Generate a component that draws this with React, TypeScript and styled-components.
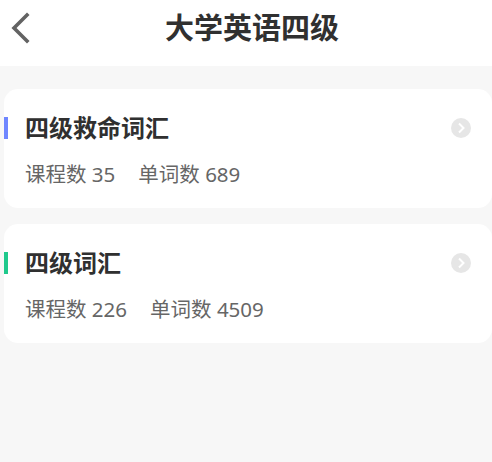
import { createGlobalStyle, styled } from "styled-components";

const GlobalStyle = createGlobalStyle`
  html, body {
    margin: 0;
    padding: 0;
    background: #f7f7f7;
    font-family: "Noto Sans", "Noto Sans CJK SC", sans-serif;
  }
  * { box-sizing: border-box; }
`;

const Page = styled.div`
  width: 492px;
  min-height: 462px;
  background: #f7f7f7;
`;

const TopBar = styled.header`
  display: flex;
  align-items: center;
  height: 66px;
  background: #ffffff;
`;

const BackBtn = styled.button`
  display: flex;
  align-items: center;
  width: 40px;
  height: 56px;
  padding: 0 0 0 10px;
  border: 0;
  background: none;
  margin-top: -10px;
`;

const Title = styled.h1`
  flex: 1;
  margin: -10px 0 0 0;
  padding-right: 28px;
  text-align: center;
  font-size: 29px;
  line-height: 36px;
  font-weight: 700;
  color: #303030;
`;

const List = styled.div`
  display: flex;
  flex-direction: column;
  gap: 16px;
  padding: 23px 0 0 4px;
`;

const Card = styled.div`
  background: #ffffff;
  border-radius: 14px;
  padding: 24px 0 21px 0;
`;

const HeadRow = styled.div`
  display: flex;
  align-items: center;
  height: 30px;
`;

const Accent = styled.span<{ $color: string }>`
  width: 4px;
  height: 22px;
  background: ${(p) => p.$color};
  margin-right: 17px;
`;

const CardTitle = styled.div`
  flex: 1;
  font-size: 24px;
  line-height: 30px;
  font-weight: 700;
  color: #303030;
`;

const Arrow = styled.span`
  display: flex;
  align-items: center;
  justify-content: center;
  width: 20px;
  height: 20px;
  border-radius: 50%;
  background: #e6e6e6;
  margin-right: 21px;
`;

const Stats = styled.div`
  display: flex;
  gap: 23px;
  margin-top: 18px;
  padding-left: 21px;
  font-size: 20.5px;
  line-height: 26px;
  color: #666666;
`;

const courses = [
  { name: "四级救命词汇", color: "#6f86ff", lessons: 35, words: 689 },
  { name: "四级词汇", color: "#1fc98c", lessons: 226, words: 4509 },
];

export default function App() {
  return (
    <Page>
      <GlobalStyle />
      <TopBar>
        <BackBtn aria-label="返回">
          <svg width="20" height="32" viewBox="0 0 20 32">
            <path d="M17 3 L4 16 L17 29" fill="none" stroke="#636363" strokeWidth="3.6" strokeLinecap="square" />
          </svg>
        </BackBtn>
        <Title>大学英语四级</Title>
      </TopBar>
      <List>
        {courses.map((c) => (
          <Card key={c.name}>
            <HeadRow>
              <Accent $color={c.color} />
              <CardTitle>{c.name}</CardTitle>
              <Arrow>
                <svg width="10" height="12" viewBox="0 0 10 12">
                  <path d="M3 1.5 L7.5 6 L3 10.5" fill="none" stroke="#ffffff" strokeWidth="2" />
                </svg>
              </Arrow>
            </HeadRow>
            <Stats>
              <span>课程数 {c.lessons}</span>
              <span>单词数 {c.words}</span>
            </Stats>
          </Card>
        ))}
      </List>
    </Page>
  );
}
